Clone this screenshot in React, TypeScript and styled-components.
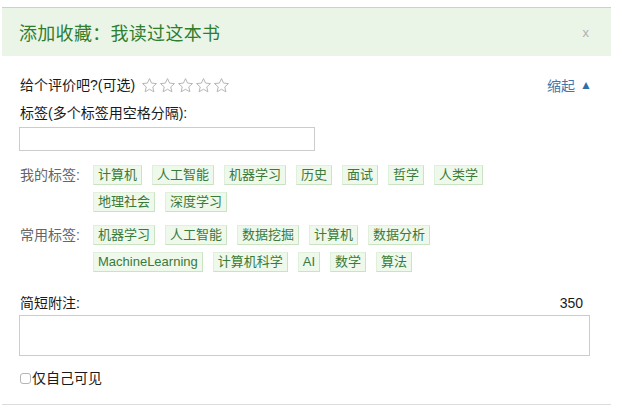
import React from "react";
import styled, { createGlobalStyle } from "styled-components";

const GlobalStyle = createGlobalStyle`
  html, body { margin: 0; padding: 0; background: #fff; }
  body {
    font-family: "Liberation Sans", "Noto Sans CJK SC", sans-serif;
    color: #1a1a1a;
  }
`;

const Dialog = styled.div`
  margin: 7px 0 0 2px;
  width: 609px;
  border-top: 1px solid #cfcfcf;
  border-bottom: 1px solid #dcdcdc;
  box-sizing: border-box;
`;

const Header = styled.div`
  height: 48px;
  background: #eaf5e7;
  display: flex;
  align-items: center;
  justify-content: space-between;
  padding: 0 22px 0 17px;
`;

const Title = styled.h2`
  margin: 0;
  font-size: 18px;
  font-weight: normal;
  color: #2f7d2f;
  letter-spacing: 0.3px;
`;

const Close = styled.span`
  font-size: 13px;
  color: #b0b0b0;
  font-family: "Liberation Sans", sans-serif;
`;

const Body = styled.div`
  padding: 0 19px 16px 15px;
`;

const RatingRow = styled.div`
  margin-top: 19px;
  height: 20px;
  display: flex;
  align-items: center;
  justify-content: space-between;
`;

const RatingLeft = styled.div`
  display: flex;
  align-items: center;
  padding-left: 3px;
`;

const Text = styled.span`
  font-size: 14px;
  line-height: 20px;
  color: #1a1a1a;
`;

const Stars = styled.div`
  display: flex;
  margin-left: 6px;
  gap: 1px;
`;

const ToggleLink = styled.a`
  font-size: 14px;
  color: #3f76ac;
  text-decoration: none;
  display: flex;
  align-items: center;
  gap: 5px;
`;

const Triangle = styled.span`
  font-size: 12px;
  color: #2f6ea8;
`;

const FieldLabel = styled.div<{ $mt: number }>`
  margin-top: ${(p) => p.$mt}px;
  padding-left: 3px;
  padding-right: 9px;
  font-size: 14px;
  line-height: 20px;
  color: #1a1a1a;
  display: flex;
  justify-content: space-between;
`;

const TagInput = styled.input`
  display: block;
  margin-top: 4px;
  margin-left: 2px;
  width: 296px;
  height: 24px;
  box-sizing: border-box;
  border: 1px solid #cccccc;
  outline: none;
`;

const TagGroup = styled.div<{ $mt: number }>`
  margin-top: ${(p) => p.$mt}px;
  display: flex;
  align-items: flex-start;
`;

const GroupLabel = styled.div`
  width: 76px;
  flex-shrink: 0;
  padding-left: 3px;
  box-sizing: border-box;
  font-size: 14px;
  line-height: 20px;
  color: #666;
`;

const TagList = styled.div`
  width: 430px;
  display: flex;
  flex-wrap: wrap;
  gap: 7px 10px;
`;

const Tag = styled.span`
  height: 20px;
  box-sizing: border-box;
  padding: 0 4px;
  line-height: 18px;
  font-size: 13px;
  color: #3a7a3a;
  background: #eef8eb;
  border: 1px solid #e0f0dc;
  border-right-color: #c9e3c3;
  border-bottom-color: #c9e3c3;
  white-space: nowrap;
`;

const NoteArea = styled.textarea`
  display: block;
  margin-top: 2px;
  margin-left: 2px;
  width: 571px;
  height: 41px;
  box-sizing: border-box;
  border: 1px solid #cccccc;
  resize: none;
  outline: none;
`;

const CheckRow = styled.label`
  margin-top: 12px;
  margin-left: 3px;
  display: flex;
  align-items: center;
  height: 20px;
`;

const CheckBox = styled.span`
  width: 11px;
  height: 11px;
  box-sizing: border-box;
  border: 1px solid #b5b5b5;
  border-radius: 3px;
  margin-right: 1px;
`;

const Star = () => (
  <svg width="17" height="17" viewBox="0 0 24 24">
    <path
      d="M12 2.2l2.9 6.4 7 .7-5.3 4.7 1.6 6.9L12 17.3l-6.2 3.6 1.6-6.9-5.3-4.7 7-.7z"
      fill="none"
      stroke="#b5b5b5"
      strokeWidth="1.4"
      strokeLinejoin="round"
    />
  </svg>
);

const myTags = ["计算机", "人工智能", "机器学习", "历史", "面试", "哲学", "人类学", "地理社会", "深度学习"];
const commonTags = ["机器学习", "人工智能", "数据挖掘", "计算机", "数据分析", "MachineLearning", "计算机科学", "AI", "数学", "算法"];

export default function App() {
  return (
    <>
      <GlobalStyle />
      <Dialog>
        <Header>
          <Title>添加收藏：我读过这本书</Title>
          <Close>x</Close>
        </Header>
        <Body>
          <RatingRow>
            <RatingLeft>
              <Text>给个评价吧?(可选)</Text>
              <Stars>
                {[0, 1, 2, 3, 4].map((i) => (
                  <Star key={i} />
                ))}
              </Stars>
            </RatingLeft>
            <ToggleLink href="#">
              缩起 <Triangle>▲</Triangle>
            </ToggleLink>
          </RatingRow>
          <FieldLabel $mt={8}>标签(多个标签用空格分隔):</FieldLabel>
          <TagInput />
          <TagGroup $mt={14}>
            <GroupLabel>我的标签:</GroupLabel>
            <TagList>
              {myTags.map((t) => (
                <Tag key={t}>{t}</Tag>
              ))}
            </TagList>
          </TagGroup>
          <TagGroup $mt={13}>
            <GroupLabel>常用标签:</GroupLabel>
            <TagList>
              {commonTags.map((t) => (
                <Tag key={t}>{t}</Tag>
              ))}
            </TagList>
          </TagGroup>
          <FieldLabel $mt={21}>
            <span>简短附注:</span>
            <span>350</span>
          </FieldLabel>
          <NoteArea />
          <CheckRow>
            <CheckBox />
            <Text>仅自己可见</Text>
          </CheckRow>
        </Body>
      </Dialog>
    </>
  );
}
